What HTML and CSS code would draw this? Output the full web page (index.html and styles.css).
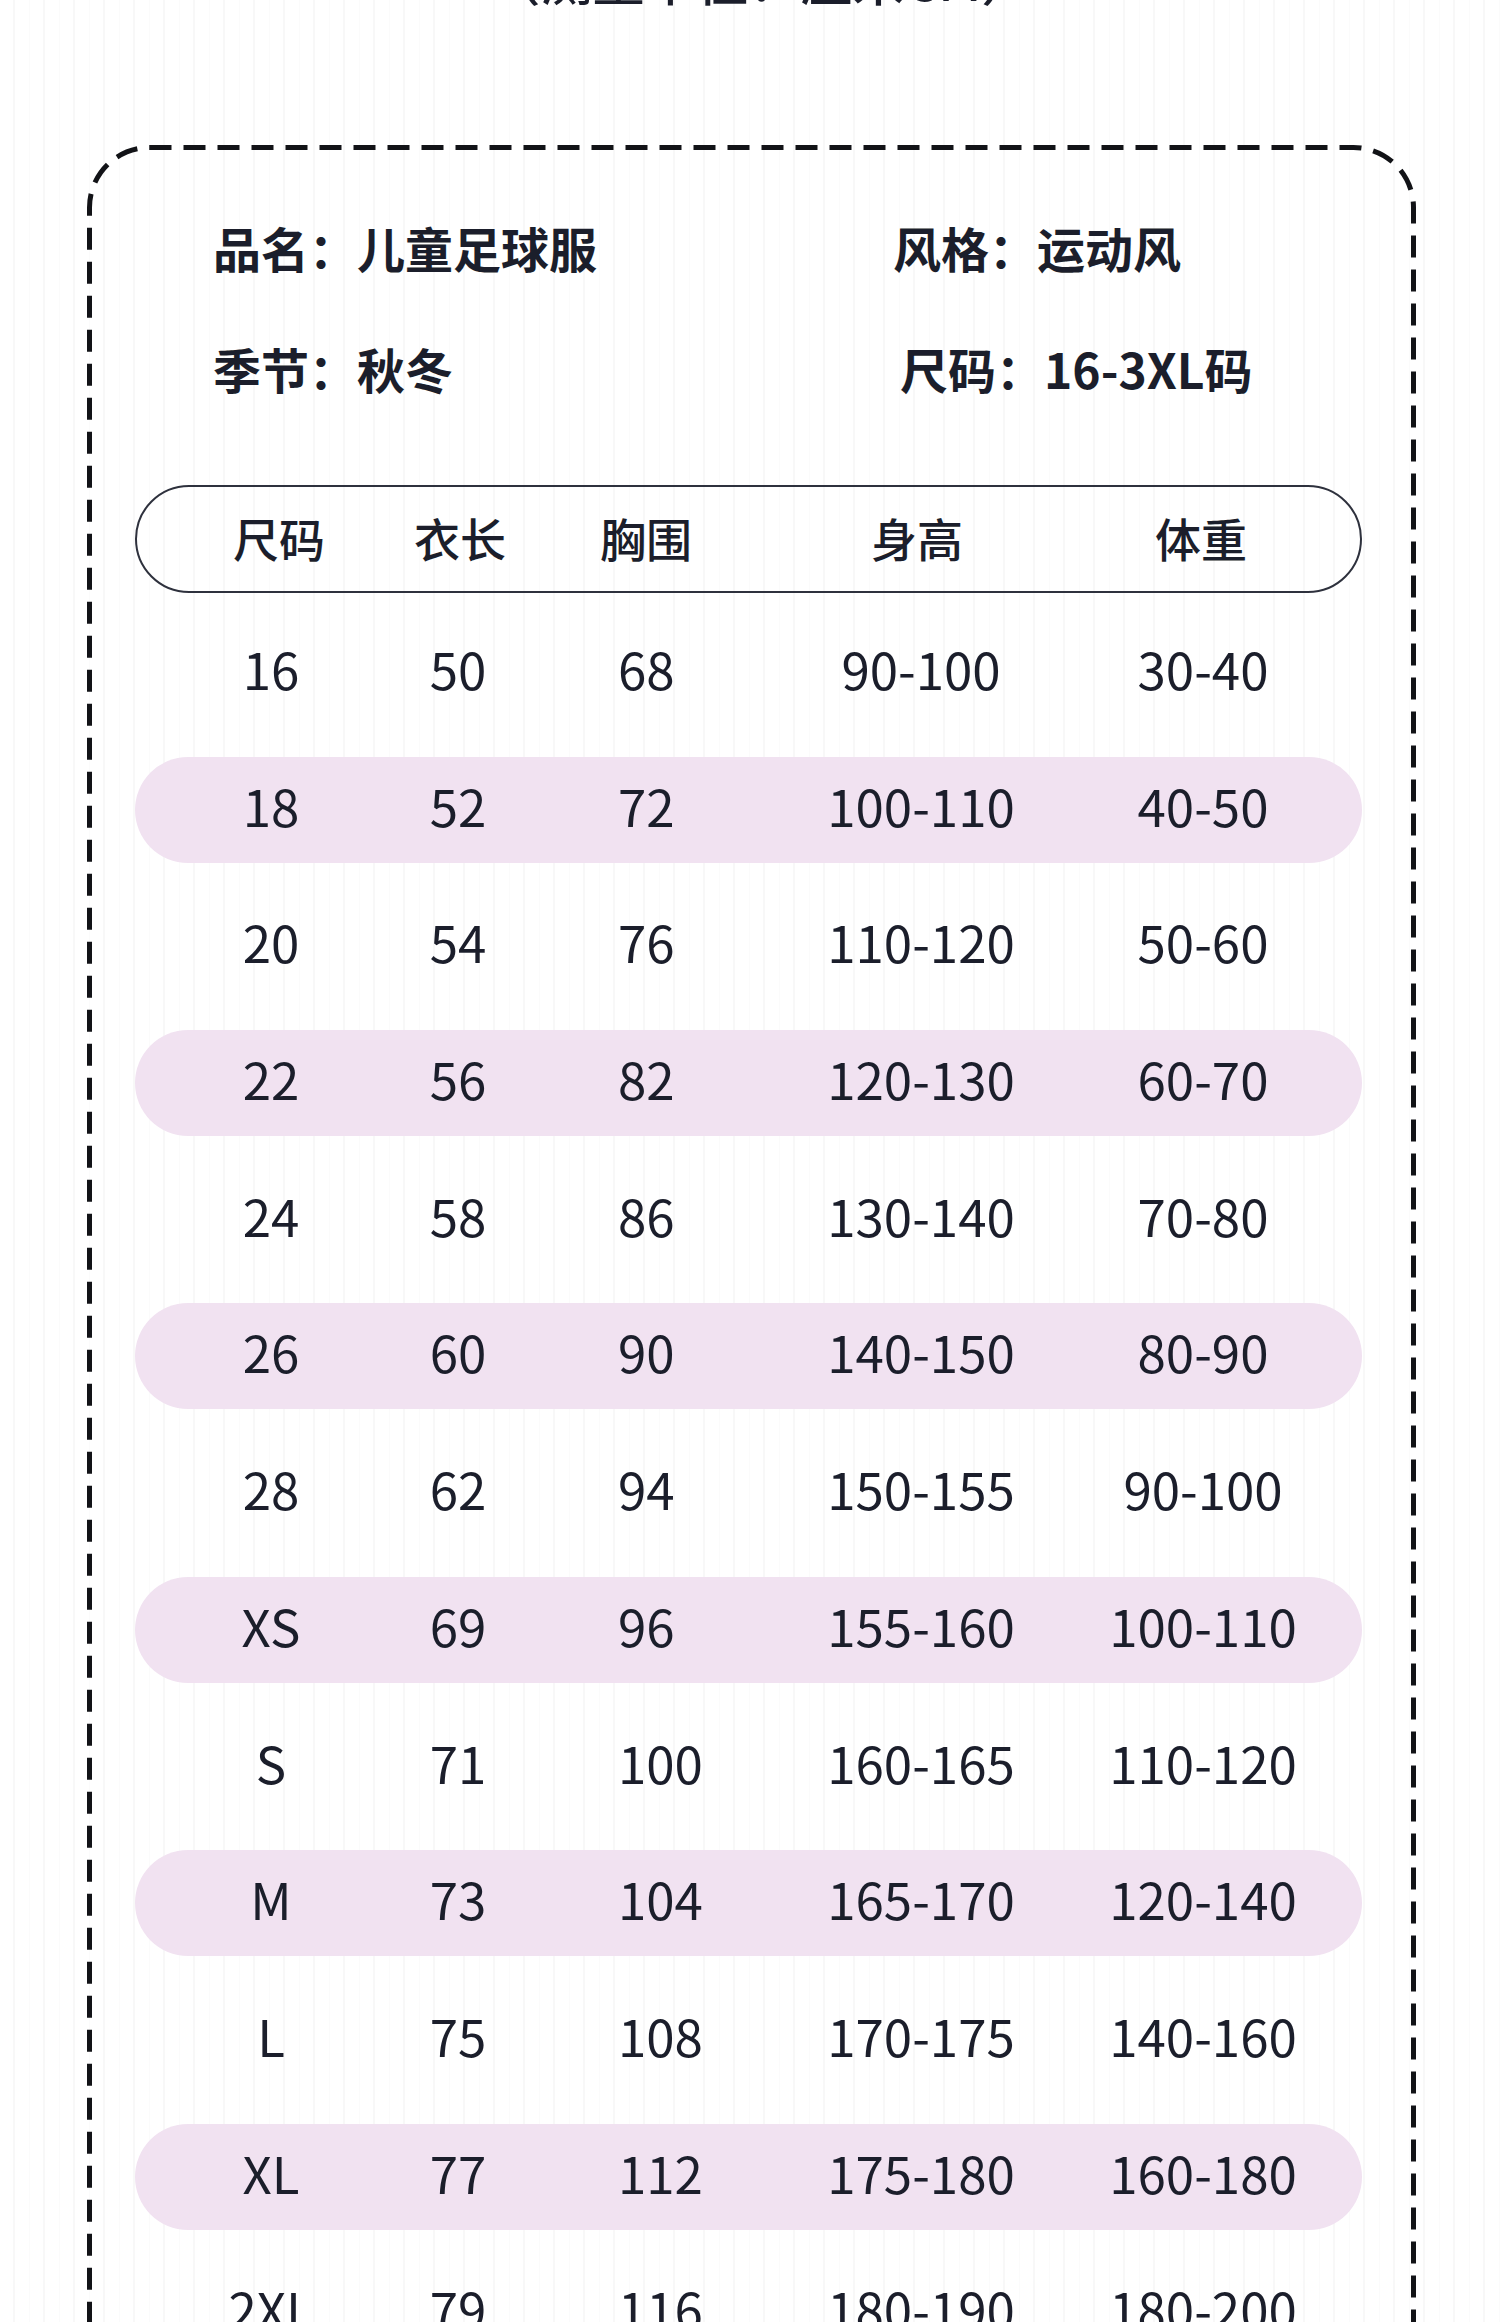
FILE: index.html
```html
<!DOCTYPE html>
<html lang="zh-CN">
<head>
<meta charset="utf-8">
<title>儿童足球服 尺码表</title>
<link rel="stylesheet" href="styles.css">
</head>
<body>
<div class="page">
  <div class="top-note">（测量单位：厘米CM）</div>
  <section class="card">
    <svg class="frame" aria-hidden="true"><rect class="frame-rect"></rect></svg>
    <div class="info">
      <div class="info-item">品名：儿童足球服</div>
      <div class="info-item">风格：运动风</div>
      <div class="info-item">季节：秋冬</div>
      <div class="info-item info-item--shift">尺码：16-3XL码</div>
    </div>
    <div class="table">
      <div class="row row--head">
        <div class="cell c1 h1">尺码</div>
        <div class="cell c2">衣长</div>
        <div class="cell c3 h3">胸围</div>
        <div class="cell c4 h4">身高</div>
        <div class="cell c5 h5">体重</div>
      </div>
      <div class="body">
        <div class="row"><div class="cell c1">16</div><div class="cell c2">50</div><div class="cell c3">68</div><div class="cell c4">90-100</div><div class="cell c5">30-40</div></div>
        <div class="row row--pink"><div class="cell c1">18</div><div class="cell c2">52</div><div class="cell c3">72</div><div class="cell c4">100-110</div><div class="cell c5">40-50</div></div>
        <div class="row"><div class="cell c1">20</div><div class="cell c2">54</div><div class="cell c3">76</div><div class="cell c4">110-120</div><div class="cell c5">50-60</div></div>
        <div class="row row--pink"><div class="cell c1">22</div><div class="cell c2">56</div><div class="cell c3">82</div><div class="cell c4">120-130</div><div class="cell c5">60-70</div></div>
        <div class="row"><div class="cell c1">24</div><div class="cell c2">58</div><div class="cell c3">86</div><div class="cell c4">130-140</div><div class="cell c5">70-80</div></div>
        <div class="row row--pink"><div class="cell c1">26</div><div class="cell c2">60</div><div class="cell c3">90</div><div class="cell c4">140-150</div><div class="cell c5">80-90</div></div>
        <div class="row"><div class="cell c1">28</div><div class="cell c2">62</div><div class="cell c3">94</div><div class="cell c4">150-155</div><div class="cell c5">90-100</div></div>
        <div class="row row--pink"><div class="cell c1">XS</div><div class="cell c2">69</div><div class="cell c3">96</div><div class="cell c4">155-160</div><div class="cell c5">100-110</div></div>
        <div class="row"><div class="cell c1">S</div><div class="cell c2">71</div><div class="cell c3">100</div><div class="cell c4">160-165</div><div class="cell c5">110-120</div></div>
        <div class="row row--pink"><div class="cell c1">M</div><div class="cell c2">73</div><div class="cell c3">104</div><div class="cell c4">165-170</div><div class="cell c5">120-140</div></div>
        <div class="row"><div class="cell c1">L</div><div class="cell c2">75</div><div class="cell c3">108</div><div class="cell c4">170-175</div><div class="cell c5">140-160</div></div>
        <div class="row row--pink"><div class="cell c1">XL</div><div class="cell c2">77</div><div class="cell c3">112</div><div class="cell c4">175-180</div><div class="cell c5">160-180</div></div>
        <div class="row"><div class="cell c1">2XL</div><div class="cell c2">79</div><div class="cell c3">116</div><div class="cell c4">180-190</div><div class="cell c5">180-200</div></div>
        <div class="row row--pink"><div class="cell c1">3XL</div><div class="cell c2">81</div><div class="cell c3">120</div><div class="cell c4">190-200</div><div class="cell c5">200-220</div></div>
      </div>
    </div>
  </section>
</div>
</body>
</html>
```

FILE: styles.css
```css
html, body {
  margin: 0;
  padding: 0;
}

body {
  background-color: #ffffff;
  background-image: repeating-linear-gradient(90deg, #ffffff 0 13px, #f8f8f8 13px 15px, #ffffff 15px 29px, #fbfbfb 29px 30px);
  color: #1b1e2b;
  font-family: "Noto Sans CJK SC", "Noto Sans", sans-serif;
}

.page {
  width: 1500px;
  overflow: hidden;
}

.top-note {
  margin-top: -47px;
  padding-left: 22px;
  font-size: 52px;
  line-height: 52px;
  font-weight: 500;
  text-align: center;
  white-space: nowrap;
}

.card {
  position: relative;
  margin: 140px 84px 0 87px;
  padding: 72px 0 200px;
}

.frame {
  position: absolute;
  inset: 0;
  width: 100%;
  height: 100%;
  overflow: visible;
  pointer-events: none;
}

.frame-rect {
  x: 2.5px;
  y: 2.5px;
  width: calc(100% - 5px);
  height: calc(100% - 5px);
  rx: 60px;
  ry: 60px;
  fill: none;
  stroke: #121317;
  stroke-width: 5px;
  stroke-dasharray: 22 12;
}

.info {
  display: grid;
  grid-template-columns: 680px 1fr;
  row-gap: 61px;
  padding-left: 126px;
  font-size: 48px;
  line-height: 60px;
  font-weight: 700;
  white-space: nowrap;
}

.info-item--shift {
  padding-left: 7px;
}

.table {
  margin: 87px 54px 0 48px;
}

.row {
  box-sizing: border-box;
  display: grid;
  grid-template-columns: 272px 102px 230px 364px 200px;
  align-items: center;
  height: 106px;
  padding-bottom: 10px;
  border-radius: 53px;
  font-size: 51px;
  white-space: nowrap;
}

.row--head {
  height: 108px;
  padding-bottom: 4px;
  border: 2px solid #2e313d;
  border-radius: 54px;
  font-size: 46px;
  font-weight: 500;
}

.row--pink {
  background-color: #f1e2f1;
}

.body {
  display: flex;
  flex-direction: column;
  gap: 30.7px;
  margin-top: 27px;
}

.cell {
  text-align: center;
}

.c3 {
  text-align: left;
  padding-left: 109px;
}

.row--head .h1 {
  padding-left: 12px;
}

.row--head .h3 {
  padding-left: 89px;
}

.row--head .h4 {
  padding-right: 12px;
}

.row--head .h5 {
  padding-right: 8px;
}
```
